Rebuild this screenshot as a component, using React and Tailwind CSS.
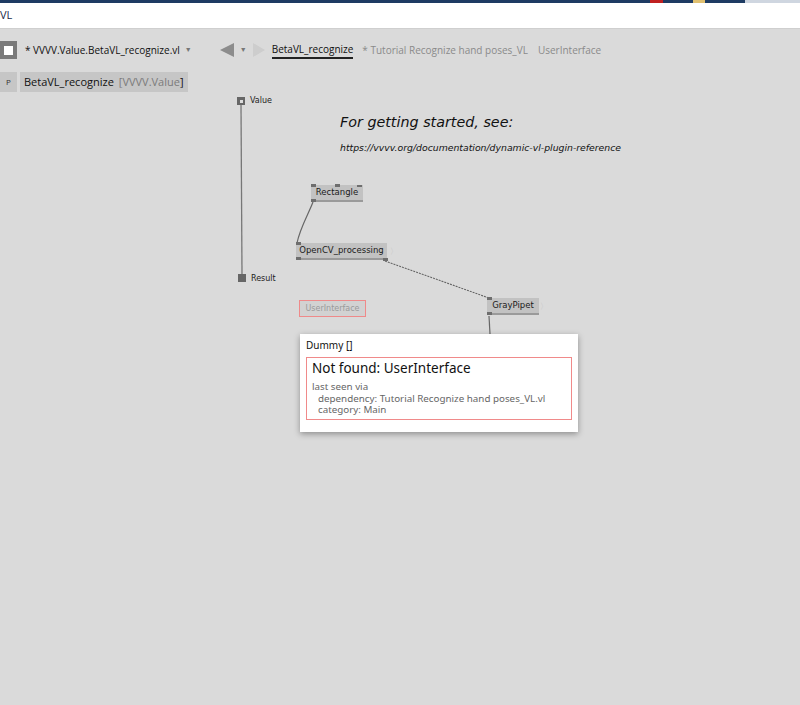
import React from 'react';

const node = "absolute flex items-center justify-center bg-[#c2c2c2] text-[8.5px] text-[#1a1a1a] border-b-2 border-[#9a9a9a] whitespace-nowrap";
const pin = "absolute w-[5px] h-[3px] bg-[#6e6e6e]";
const dv = { fontFamily: '"DejaVu Sans", sans-serif' };

function Node({ x, y, w, label, children }) {
  return (
    <div className={node} style={{ left: x, top: y, width: w, height: 17, ...dv }}>
      {label}
      {children}
    </div>
  );
}

export default function App() {
  return (
    <div className="relative w-[800px] h-[705px] overflow-hidden bg-[#dadada]" style={{ fontFamily: '"Open Sans", "Noto Sans", sans-serif' }}>
      {/* window chrome */}
      <div className="h-[3px] bg-[#1e3b63] flex">
        <div className="ml-[650px] w-[14px] bg-[#c02020]" />
        <div className="ml-[30px] w-[14px] bg-[#e0c070]" />
        <div className="ml-[40px] w-[60px] bg-[#cfd6e0]" />
      </div>
      <div className="h-[26px] bg-white border-b border-[#cfcfcf] flex items-center text-[11px] text-[#1b2a48]">
        VL
      </div>

      {/* document tabs */}
      <div className="flex items-center h-[20px] mt-[11px] text-[10px] whitespace-nowrap">
        <div className="w-[17px] h-[18px] bg-[#7a7a7a] flex items-center justify-center">
          <div className="w-[9px] h-[9px] bg-white" />
        </div>
        <span className="ml-[8px] text-[#111]">* VVVV.Value.BetaVL_recognize.vl</span>
        <span className="ml-[5px] text-[7px] text-[#777]">▼</span>
        <div className="ml-[27px] flex items-center">
          <svg width="16" height="16" viewBox="0 0 16 16"><polygon points="15,1 15,15 1,8" fill="#8c8c8c" /></svg>
          <span className="ml-[5px] text-[7px] text-[#777]">▼</span>
          <svg className="ml-[5px]" width="14" height="16" viewBox="0 0 14 16"><polygon points="1,1 1,15 13,8" fill="#cdcdcd" /></svg>
        </div>
        <span className="ml-[6px] text-[#111] border-b-2 border-[#222] leading-[15px] pt-[1px]">BetaVL_recognize</span>
        <span className="ml-[9px] text-[#8a8a8a]">* Tutorial Recognize hand poses_VL</span>
        <span className="ml-[10px] text-[#8a8a8a]">UserInterface</span>
      </div>

      {/* patch path */}
      <div className="flex items-center h-[20px] mt-[12px] text-[11px] whitespace-nowrap">
        <div className="w-[17px] h-[20px] bg-[#c6c6c6] flex items-center justify-center text-[8px] text-[#333]">P</div>
        <div className="ml-[3px] h-[20px] bg-[#c6c6c6] flex items-center px-[4px] text-[#111]">
          BetaVL_recognize <span className="ml-[5px] text-[#7b7b7b]">[VVVV.Value</span><span className="text-[#111]">]</span>
        </div>
      </div>

      {/* canvas */}
      <svg className="absolute left-0 top-0" width="800" height="705">
        <line x1="241" y1="104" x2="242" y2="275" stroke="#777" strokeWidth="1.3" />
        <path d="M313 202 C 308 215, 300 228, 297 243" stroke="#666" strokeWidth="1.2" fill="none" />
        <line x1="385" y1="261" x2="489" y2="298" stroke="#666" strokeWidth="1.1" strokeDasharray="2 1" />
        <line x1="489" y1="316" x2="490" y2="334" stroke="#666" strokeWidth="1.2" />
      </svg>

      <div className="absolute left-[237px] top-[97px] w-[8px] h-[8px] bg-[#666] flex items-center justify-center">
        <div className="w-[3px] h-[3px] bg-[#ddd]" />
      </div>
      <span className="absolute left-[250px] top-[95px] text-[8px] text-[#222]" style={dv}>Value</span>
      <div className="absolute left-[238px] top-[274px] w-[8px] h-[8px] bg-[#666]" />
      <span className="absolute left-[251px] top-[273px] text-[8px] text-[#222]" style={dv}>Result</span>

      <div className="absolute left-[340px] top-[112px] italic text-[14.3px] text-[#111]" style={dv}>For getting started, see:</div>
      <div className="absolute left-[340px] top-[141px] italic text-[9.3px] text-[#111]" style={dv}>https://vvvv.org/documentation/dynamic-vl-plugin-reference</div>

      <Node x={311} y={185} w={52} label="Rectangle">
        <div className={pin} style={{ left: 0, top: -1 }} />
        <div className={pin} style={{ left: 24, top: -1 }} />
        <div className={pin} style={{ left: 46, top: 0, height: 2 }} />
        <div className={pin} style={{ left: 0, top: 14 }} />
      </Node>

      <Node x={296} y={243} w={91} label="OpenCV_processing">
        <div className={pin} style={{ left: 0, top: -1 }} />
        <div className={pin} style={{ left: 0, top: 14 }} />
        <div className={pin} style={{ left: 87, top: 15 }} />
      </Node>
      <span className="absolute left-[390px] top-[245px] text-[8px] text-[#c4c4c4]">〉</span>

      <div className="absolute left-[299px] top-[300px] w-[67px] h-[17px] bg-[#d2d2d2] border border-[#ef8a8a] flex items-center justify-center text-[8px] text-[#9a9a9a]" style={dv}>
        UserInterface
      </div>

      <Node x={487} y={298} w={52} label="GrayPipet">
        <div className={pin} style={{ left: 0, top: -1 }} />
        <div className={pin} style={{ left: 0, top: 14 }} />
      </Node>
      <span className="absolute left-[540px] top-[300px] text-[8px] text-[#c4c4c4]">〉</span>

      {/* tooltip */}
      <div className="absolute left-[300px] top-[334px] w-[278px] h-[98px] bg-white shadow-[0_2px_6px_rgba(0,0,0,0.35)] px-[6px] pt-[4px] whitespace-nowrap" style={{ fontFamily: '"Noto Sans", sans-serif' }}>
        <div className="text-[10px] text-[#111] leading-[14px]">Dummy []</div>
        <div className="mt-[5px] border border-[#f08a8a] h-[63px] px-[5px] pt-[1px]">
          <div className="text-[13.5px] text-[#111] leading-[18px]">Not found: UserInterface</div>
          <div className="mt-[4px] flex flex-col text-[9.8px] text-[#666] leading-[11.6px]">
            <div>last seen via</div>
            <div className="pl-[6px]">dependency: Tutorial Recognize hand poses_VL.vl</div>
            <div className="pl-[6px]">category: Main</div>
          </div>
        </div>
      </div>
    </div>
  );
}
